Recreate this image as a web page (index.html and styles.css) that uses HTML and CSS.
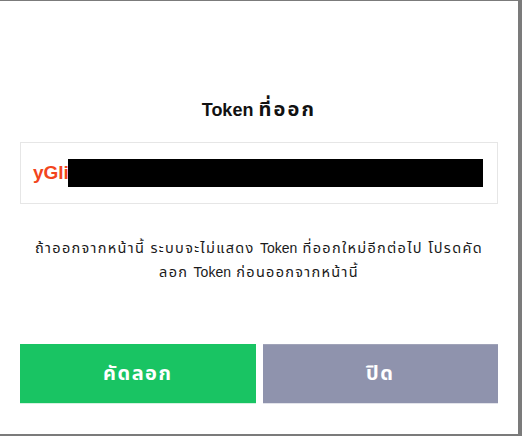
FILE: index.html
```html
<!DOCTYPE html>
<html lang="th">
<head>
    <meta charset="UTF-8">
    <meta name="viewport" content="width=device-width, initial-scale=1.0">
    <title>Token ที่ออก</title>
    <link rel="stylesheet" href="styles.css">
</head>
<body>
    <div class="modal">
        <h2 class="title">Token <span class="th">ที่ออก</span></h2>
        <div class="token-box">
            <span class="token-text">yGli</span>
            <span class="token-mask"></span>
        </div>
        <p class="notice">ถ้าออกจากหน้านี้ ระบบจะไม่แสดง <span class="en">Token</span> ที่ออกใหม่อีกต่อไป โปรดคัด<br>ลอก <span class="en">Token</span> ก่อนออกจากหน้านี้</p>
        <div class="actions">
            <button class="btn btn-copy">คัดลอก</button>
            <button class="btn btn-close">ปิด</button>
        </div>
    </div>
</body>
</html>
```

FILE: styles.css
```css
* {
    margin: 0;
    padding: 0;
    box-sizing: border-box;
}
body {
    font-family: 'Liberation Sans', 'Noto Sans Thai', 'Noto Sans', sans-serif;
    color: #111;
    background: #7b7b7b;
    width: 522px;
    height: 436px;
    overflow: hidden;
    padding-top: 1px;
}
.modal {
    width: 518px;
    height: 433px;
    background: #fff;
    padding: 0 20px;
    display: flex;
    flex-direction: column;
}
.title {
    font-size: 18px;
    font-weight: 700;
    text-align: center;
    margin-top: 96px;
    line-height: 24px;
}
.title .th {
    font-size: 20px;
    letter-spacing: 2.2px;
}
.token-box {
    margin-top: 20px;
    height: 62px;
    border: 1px solid #e6e6e6;
    display: flex;
    align-items: center;
    padding: 0 12px;
}
.token-text {
    color: #f2451d;
    font-size: 19px;
    font-weight: 700;
}
.token-mask {
    display: block;
    width: 415px;
    height: 28px;
    background: #000;
    margin-left: -1px;
}
.notice {
    margin-top: 32px;
    font-size: 14.5px;
    line-height: 24px;
    letter-spacing: 1.3px;
    text-align: center;
    color: #1a1a1a;
}
.notice .en {
    font-size: 14px;
    letter-spacing: 0;
}
.actions {
    margin-top: 60px;
    display: flex;
    gap: 7px;
}
.btn {
    flex: 1;
    height: 60px;
    border: none;
    color: #fff;
    font-family: inherit;
    font-size: 20px;
    font-weight: 700;
    letter-spacing: 1.5px;
    cursor: pointer;
}
.btn-copy {
    background: #19c463;
    border-bottom: 1px solid #d4f2e0;
}
.btn-close {
    background: #8f93ad;
    border-top: 1px solid #a0a3b8;
    border-bottom: 1px solid #e2e3ea;
}
```
